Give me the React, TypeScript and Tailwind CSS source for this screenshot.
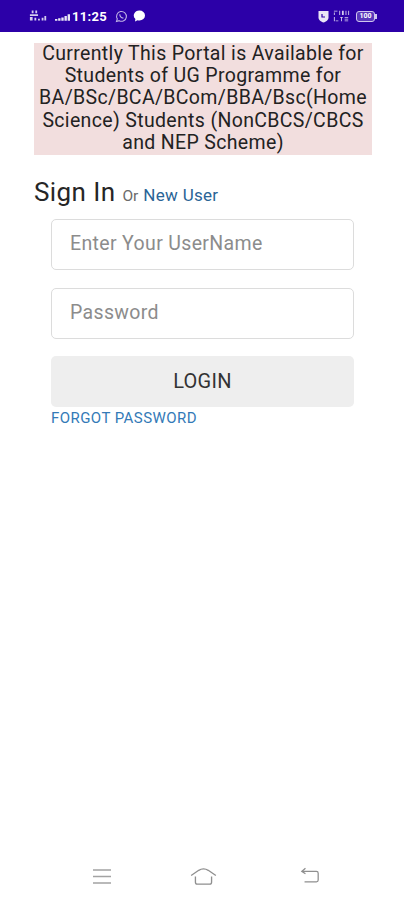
import React from "react";

function StatusBar() {
  return (
    <div className="h-[32px] shrink-0 bg-[#2c00a8] flex items-center pl-[29px] text-white">
      <svg width="19" height="14" viewBox="0 0 21 14" className="mr-[7px] opacity-80">
        <path d="M3 1h2v3H3zM7 1h2v3H7zM1 5h9v2H1zM1 8h3v4H1zM6 9h2v3H6zM10 10h2v2h-2zM14 9h2v3h-2zM17 7h2v5h-2z" fill="#fff" />
      </svg>
      <svg width="15" height="7" viewBox="0 0 19 8" className="mr-[2px] mt-[3px] opacity-90">
        <path d="M0 6h3v2H0zM4 5h3v3H4zM8 4h3v4H8zM12 2h3v6h-3zM16 0h3v8h-3z" fill="#fff" />
      </svg>
      <span className="text-[13px] font-bold leading-none font-['Roboto',sans-serif] tracking-[0.3px]">11:25</span>
      <svg width="13" height="13" viewBox="0 0 13 13" className="ml-[8px] opacity-70" fill="none" stroke="#fff" strokeWidth="1.1">
        <path d="M1.500 11.500l.8-2.600a4.900 4.900 0 1 1 1.900 1.800z" />
        <path d="M4.800 4.200c0 2 1.600 3.600 3.600 3.900" />
      </svg>
      <svg width="13" height="12" viewBox="0 0 13 12" className="ml-[5px]">
        <path d="M6.500 0.500a5.500 5 0 0 1 0 10c-.8 0-1.400-.1-2-.3L2 11.500l.4-2.500A5.500 5 0 0 1 6.500 .5z" fill="#fff" />
      </svg>
      <svg width="13" height="13" viewBox="0 0 13 13" className="ml-[171px] opacity-90">
        <path d="M1.500 1h10v6.500c0 2.500-2.500 4.500-5 5-2.500-.5-5-2.500-5-5z" fill="#fff" />
        <path d="M5 4v3h3" fill="none" stroke="#2c00a8" strokeWidth="1.2" />
      </svg>
      <svg width="17" height="14" viewBox="0 0 19 14" className="ml-[3px] opacity-80">
        <path d="M1 1h4v1H1zM1 3h1v3H1zM7 1h1v5H7zM10 1h2v5h-2zM14 1h1v5h-1zM17 1h1v5h-1zM1 8h1v5H1zM3 12h3v1H3zM8 8h3v1H8zM9 9h1v4H9zM13 8h4v1h-4zM13 10h4v1h-4zM13 12h4v1h-4z" fill="#fff" />
      </svg>
      <div className="relative ml-[6px] flex h-[11px] w-[19px] items-center justify-center rounded-[3px] border border-[#cfc6ee] bg-[#5a38bb]">
        <span className="text-[7px] font-bold leading-none text-white font-['Roboto',sans-serif]">100</span>
        <span className="absolute -right-[3px] top-[2px] h-[5px] w-[2px] bg-[#cfc6ee]" />
      </div>
    </div>
  );
}

function NavBar() {
  return (
    <div className="h-[68px] shrink-0 flex items-start pl-[92px] pt-[35px]">
      <svg width="20" height="18" viewBox="0 0 20 18" fill="none" stroke="#a3a3a3" strokeWidth="1.6">
        <path d="M1 3h18M1 9.500h18M1 16h18" />
      </svg>
      <svg width="27" height="19" viewBox="0 0 28 20" fill="none" stroke="#8f8f8f" strokeWidth="1.4" className="ml-[78px]">
        <path d="M1 9l8-5.500c2-1.300 2.800-1.500 5-1.500s3 .2 5 1.500L27 9" />
        <path d="M5.500 10v6c0 1.200.8 2 2 2h13c1.200 0 2-.8 2-2v-6" />
      </svg>
      <svg width="20" height="17" viewBox="0 0 22 18" fill="none" stroke="#8f8f8f" strokeWidth="1.4" className="ml-[83px]">
        <path d="M2 4.500h16c1.200 0 2 .8 2 2V14c0 1.200-.8 2-2 2H5" />
        <path d="M6 1L2 4.500 6 7" />
      </svg>
    </div>
  );
}

function Field({ placeholder }: { placeholder: string }) {
  return (
    <div className="h-[51px] w-[303px] rounded-[5px] border border-[#dcdcdc] bg-white flex items-center pl-[18px] text-[19.500px] text-[#8c8c8c] tracking-[0.35px]">
      {placeholder}
    </div>
  );
}

export default function App() {
  return (
    <div className="flex h-[900px] w-[404px] flex-col overflow-hidden bg-white font-['Roboto',sans-serif]">
      <StatusBar />
      <main className="flex-1 pt-[11px]">
        <div className="ml-[34px] h-[112px] w-[338px] bg-[#f2dede] text-center text-[19.500px] leading-[22.200px] text-[#222222] tracking-[0.34px]">
          Currently This Portal is Available for Students of UG Programme for BA/BSc/BCA/BCom/BBA/Bsc(Home Science) Students (NonCBCS/CBCS and NEP Scheme)
        </div>
        <div className="ml-[34px] mt-[21px] flex items-baseline">
          <span className="text-[26px] leading-[32px] text-[#262626] tracking-[0.4px]">Sign In</span>
          <span className="ml-[7px] text-[15.500px] text-[#6b6b6b]">Or</span>
          <span className="ml-[5px] text-[17px] text-[#2a6496] tracking-[0.3px]">New User</span>
        </div>
        <div className="ml-[51px] mt-[10px] flex flex-col">
          <Field placeholder="Enter Your UserName" />
          <div className="mt-[18px]">
            <Field placeholder="Password" />
          </div>
          <div className="mt-[17px] flex h-[51px] w-[303px] items-center justify-center rounded-[5px] bg-[#eeeeee] text-[20px] text-[#333333] tracking-[0.3px]">
            LOGIN
          </div>
          <span className="mt-[1px] text-[15px] leading-[20px] text-[#337ab7] tracking-[0.45px]">FORGOT PASSWORD</span>
        </div>
      </main>
      <NavBar />
    </div>
  );
}
